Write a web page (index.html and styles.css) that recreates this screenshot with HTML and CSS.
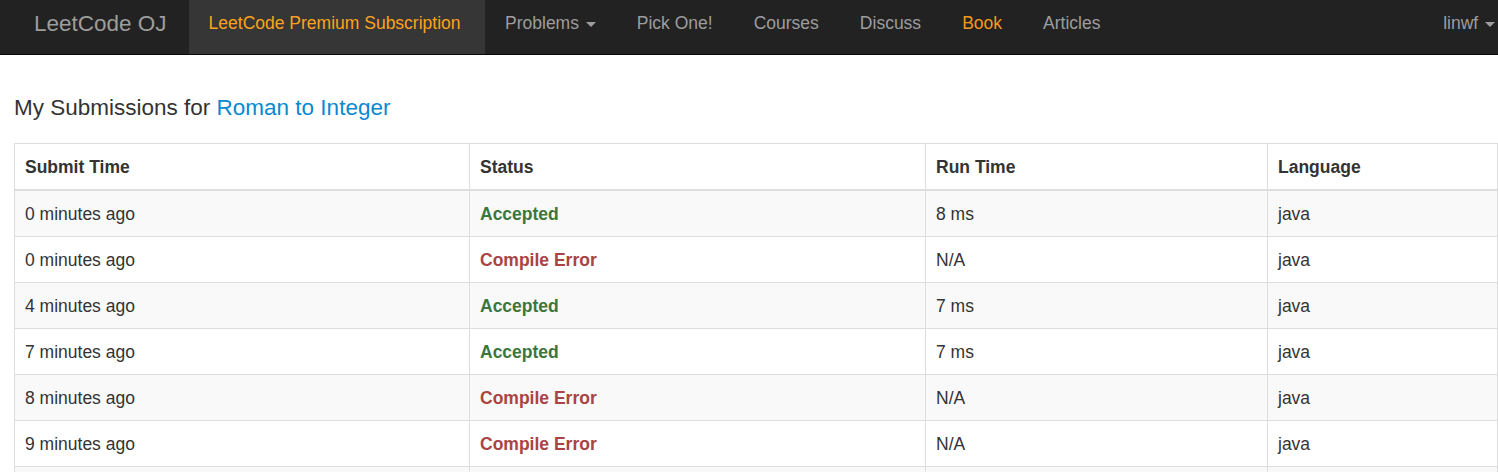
FILE: index.html
```html
<!DOCTYPE html>
<html>
<head>
<meta charset="utf-8">
<title>My Submissions</title>
<link rel="stylesheet" href="styles.css">
</head>
<body>
<nav class="navbar">
  <a class="brand" href="#">LeetCode OJ</a>
  <ul class="nav">
    <li class="active"><a class="premium" href="#">LeetCode Premium Subscription</a></li>
    <li><a href="#">Problems <span class="caret"></span></a></li>
    <li><a href="#">Pick One!</a></li>
    <li><a href="#">Courses</a></li>
    <li><a href="#">Discuss</a></li>
    <li><a class="book" href="#">Book</a></li>
    <li><a href="#">Articles</a></li>
  </ul>
  <ul class="nav nav-right">
    <li><a class="user" href="#">linwf <span class="caret"></span></a></li>
  </ul>
</nav>
<main class="container">
  <h4 class="title">My Submissions for <a href="#">Roman to Integer</a></h4>
  <table class="table">
    <colgroup>
      <col class="c1"><col class="c2"><col class="c3"><col class="c4">
    </colgroup>
    <thead>
      <tr><th>Submit Time</th><th>Status</th><th>Run Time</th><th>Language</th></tr>
    </thead>
    <tbody>
      <tr><td>0 minutes ago</td><td><strong class="ok">Accepted</strong></td><td>8 ms</td><td>java</td></tr>
      <tr><td>0 minutes ago</td><td><strong class="err">Compile Error</strong></td><td>N/A</td><td>java</td></tr>
      <tr><td>4 minutes ago</td><td><strong class="ok">Accepted</strong></td><td>7 ms</td><td>java</td></tr>
      <tr><td>7 minutes ago</td><td><strong class="ok">Accepted</strong></td><td>7 ms</td><td>java</td></tr>
      <tr><td>8 minutes ago</td><td><strong class="err">Compile Error</strong></td><td>N/A</td><td>java</td></tr>
      <tr><td>9 minutes ago</td><td><strong class="err">Compile Error</strong></td><td>N/A</td><td>java</td></tr>
      <tr class="more"><td></td><td></td><td></td><td></td></tr>
    </tbody>
  </table>
</main>
</body>
</html>
```

FILE: styles.css
```css
html, body {
  margin: 0;
  padding: 0;
  overflow: hidden;
}
body {
  font-family: "Liberation Sans", Arial, Helvetica, sans-serif;
  font-size: 17.5px;
  line-height: 25px;
  color: #333;
  background: #fff;
}
a {
  text-decoration: none;
}
.navbar {
  display: flex;
  height: 55px;
  box-sizing: border-box;
  background: #222;
  border-bottom: 1px solid #080808;
  padding-left: 15px;
}
.brand {
  color: #9d9d9d;
  font-size: 22.5px;
  line-height: 25px;
  padding: 11px 22px 0 19px;
}
.nav {
  display: flex;
  list-style: none;
  margin: 0;
  padding: 0;
}
.nav li {
  display: flex;
}
.nav a {
  display: block;
  color: #9d9d9d;
  padding: 11px 20.5px 0;
  line-height: 25px;
}
.nav .active {
  background: #363636;
}
.nav .active a {
  padding: 11px 24px 0 20px;
}
.premium {
  color: #fda31b !important;
}
.book {
  color: #f6981e !important;
}
.nav-right {
  margin-left: auto;
}
.nav-right .user {
  padding-right: 3px;
}
.caret {
  display: inline-block;
  width: 0;
  height: 0;
  margin-left: 2px;
  vertical-align: middle;
  border-top: 5px solid;
  border-left: 5px solid transparent;
  border-right: 5px solid transparent;
}
.container {
  padding: 0 14px;
}
.title {
  font-size: 22.5px;
  font-weight: normal;
  line-height: 25px;
  margin: 40px 0 23px;
  color: #333;
}
.title a {
  color: #0a88d0;
}
.table {
  border-collapse: collapse;
  table-layout: fixed;
  width: 1483px;
  border: 1px solid #ddd;
}
.c1 { width: 455px; }
.c2 { width: 456px; }
.c3 { width: 342px; }
.c4 { width: 230px; }
.table th,
.table td {
  border: 1px solid #ddd;
  padding: 11px 10px 9px;
  text-align: left;
  vertical-align: top;
  line-height: 25px;
}
.table th {
  font-weight: bold;
  border-bottom-width: 2px;
}
.table tbody tr:nth-child(odd) {
  background: #f9f9f9;
}
.table .more td {
  height: 25px;
}
.ok {
  color: #3c763d;
}
.err {
  color: #a94442;
}
```
